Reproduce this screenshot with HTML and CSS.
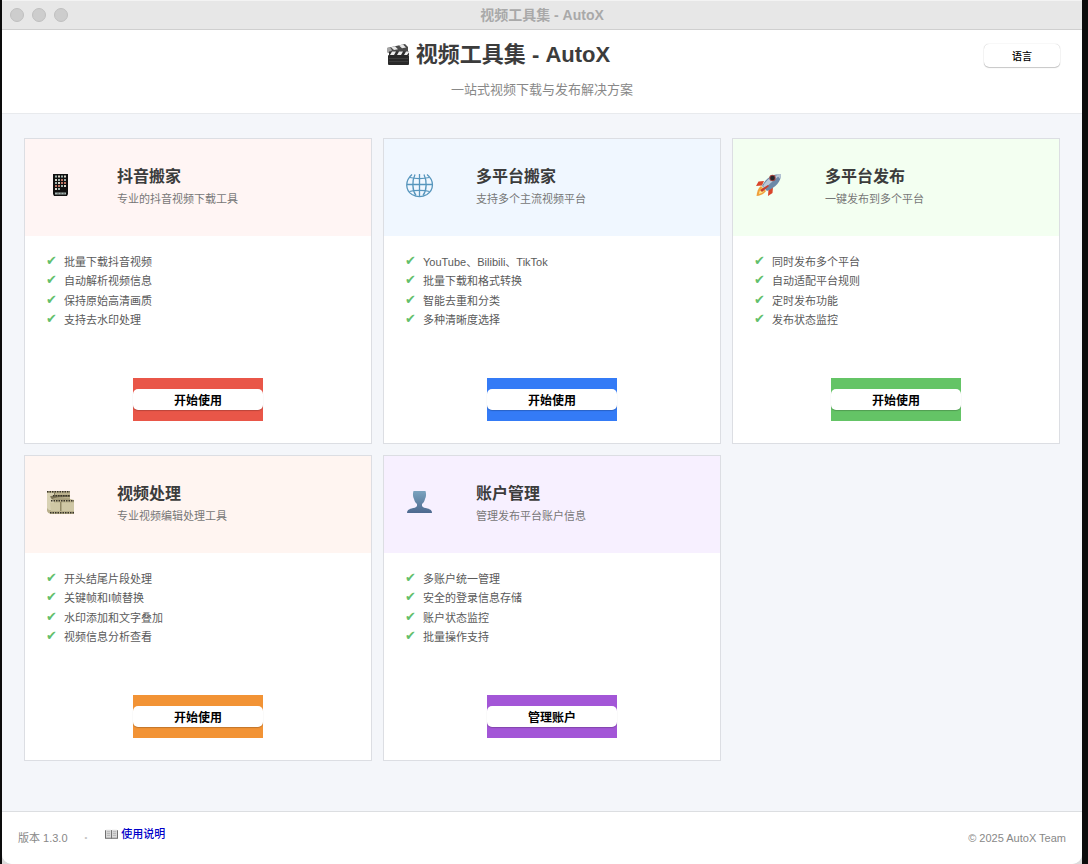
FILE: index.html
```html
<!DOCTYPE html>
<html lang="zh-CN">
<head>
    <meta charset="UTF-8">
    <meta name="viewport" content="width=device-width, initial-scale=1.0">
    <title>视频工具集 - AutoX</title>
    <link rel="stylesheet" href="styles.css">
</head>
<body>
    <div class="window">
        <div class="titlebar">
            <div class="lights"><i></i><i></i><i></i></div>
            <span class="titlebar-text">视频工具集 - AutoX</span>
        </div>

        <header class="header">
            <div class="header-row">
                <h1>
                    <svg class="clapper" viewBox="0 0 24 22" aria-hidden="true">
                        <path d="M1 4L19 0l3 3v6H3L1 8z" fill="#4a4a4a"/>
                        <path d="M5 3.200l4-1 3 3-4 .8zM13 1.500l4-1 3 3-4 .8z" fill="#e8e8e8"/>
                        <path d="M1 4l3-.7 2 3L3 9 1 8z" fill="#a5a5a5"/>
                        <path d="M3 7.500h20v3.500H3z" fill="#303030"/>
                        <path d="M6 7.500h4L8 11H4zM13 7.500h4L15 11h-4zM20 7.500h3v1L21 11h-3z" fill="#eee"/>
                        <rect x="2" y="11" width="21" height="10" rx="1" fill="#292929"/>
                        <path d="M3 14.500h19M3 17.500h19" stroke="#484848" stroke-width=".7"/>
                    </svg>
                    <span>视频工具集 - AutoX</span>
                </h1>
                <button type="button" class="lang-btn">语言</button>
            </div>
            <p class="tagline">一站式视频下载与发布解决方案</p>
        </header>

        <main class="cards">
            <section class="card red">
                <div class="card-head">
                    <svg class="card-icon" viewBox="0 0 28 24" aria-hidden="true">
                        <path d="M6 1h15v20l-1 2H7l-1-2z" fill="#111"/>
                        <g fill="#9fb3ad">
                            <path d="M8 2.500h2v2H8zM14 2.500h2v2h-2zM11 6h2v2h-2zM17 6h2v2h-2zM8 9h2v2H8zM14 12h2v2h-2zM11 15h2v2h-2z"/>
                        </g>
                        <g fill="#d8d4c8">
                            <path d="M11 2.500h2v2h-2zM17 2.500h2v2h-2zM8 6h2v2H8zM11 9h2v2h-2zM17 12h2v2h-2zM8 15h2v2H8z"/>
                        </g>
                        <g fill="#bd7563">
                            <path d="M14 6h2v2h-2zM14 9h2v2h-2zM17 9h2v2h-2zM8 12h2v2H8zM11 12h2v2h-2z"/>
                        </g>
                        <path d="M8 19.500h11v2H8z" fill="#a9b9b4"/>
                        <path d="M11 19.500v2M14 19.500v2M17 19.500v2" stroke="#333" stroke-width=".7"/>
                    </svg>
                    <div>
                        <h2>抖音搬家</h2>
                        <p>专业的抖音视频下载工具</p>
                    </div>
                </div>
                <ul>
                    <li><span class="check">✔</span>批量下载抖音视频</li>
                    <li><span class="check">✔</span>自动解析视频信息</li>
                    <li><span class="check">✔</span>保持原始高清画质</li>
                    <li><span class="check">✔</span>支持去水印处理</li>
                </ul>
                <div class="action"><button type="button">开始使用</button></div>
            </section>

            <section class="card blue">
                <div class="card-head">
                    <svg class="card-icon" viewBox="0 0 28 24" aria-hidden="true">
                        <g fill="none" stroke="#5796bd" stroke-width="1.300">
                            <path d="M6 1.500C-1.500 8-.5 17.500 6 21.500c4.500 2.500 10.500 2.500 15 0C28 17 28.500 7.500 21 1.500"/>
                            <path d="M9 1.500C6 8 6 17 10 22.500M18 1.500c3 6.500 3 15.500-1 21M13.500 1v22"/>
                            <path d="M4 4.500c5 1.500 14 1.500 19 0M1 11.500h25M3.500 18.500c5-1.500 15-1.500 20 0"/>
                        </g>
                    </svg>
                    <div>
                        <h2>多平台搬家</h2>
                        <p>支持多个主流视频平台</p>
                    </div>
                </div>
                <ul>
                    <li><span class="check">✔</span>YouTube、Bilibili、TikTok</li>
                    <li><span class="check">✔</span>批量下载和格式转换</li>
                    <li><span class="check">✔</span>智能去重和分类</li>
                    <li><span class="check">✔</span>多种清晰度选择</li>
                </ul>
                <div class="action"><button type="button">开始使用</button></div>
            </section>

            <section class="card green">
                <div class="card-head">
                    <svg class="card-icon" viewBox="0 0 28 24" aria-hidden="true">
                        <path d="M9 8L3.500 8.500 1 13l6-.5zM18 14l-.5 6-4.500 3 .5-7z" fill="#d9452b"/>
                        <path d="M6 13c-3 2-4 6-4.500 10C6 22.500 9 21 11 18z" fill="#f0a03c"/>
                        <path d="M6.500 15.500c-2 2-2.500 4-2.500 5.500 2-.5 4-1.500 5-3z" fill="#fbe58b"/>
                        <path d="M7 13C11 5 17 1 26 1c0 8-5 13-14 17z" fill="#6c88a8"/>
                        <path d="M8 13C12 6 17 2.500 25 2L10 15z" fill="#b9c8d9"/>
                        <path d="M21 1.300L26 1c0 2-.3 3.500-.8 5z" fill="#b6c5d5"/>
                        <circle cx="17.500" cy="5" r="3.200" fill="#a34540"/>
                        <circle cx="17.500" cy="5" r="2.300" fill="#26252c"/>
                        <path d="M5 17l8-5 1 1-7 6z" fill="#c73b2c"/>
                    </svg>
                    <div>
                        <h2>多平台发布</h2>
                        <p>一键发布到多个平台</p>
                    </div>
                </div>
                <ul>
                    <li><span class="check">✔</span>同时发布多个平台</li>
                    <li><span class="check">✔</span>自动适配平台规则</li>
                    <li><span class="check">✔</span>定时发布功能</li>
                    <li><span class="check">✔</span>发布状态监控</li>
                </ul>
                <div class="action"><button type="button">开始使用</button></div>
            </section>

            <section class="card orange">
                <div class="card-head">
                    <svg class="card-icon" viewBox="0 0 28 24" aria-hidden="true">
                        <path d="M0 1h23v8l4 1v14H4c-2-.5-3.500-1.500-4-3z" fill="#b9b08c"/>
                        <path d="M0 3h7v17H2l-2-2z" fill="#d8d1b3"/>
                        <path d="M3 12.500h10v8.500H4zM14.500 12.500H27V21H14.500z" fill="#cfc7a5"/>
                        <path d="M3 6.500c4-2 14-1.500 20-1.500v2C16 7 8 7 5 9.500z" fill="#7d7456"/>
                        <path d="M5 9.500C8 8 16 8 23 8.500V10H6z" fill="#a59c79"/>
                        <path d="M0 1.800h23M6 5.800h17M4 10.800h23M3 22.800h24" stroke="#38342a" stroke-width="1.400" stroke-dasharray="1.500 1"/>
                        <path d="M13.800 12v9M7.500 2.500v2.500" stroke="#827958"/>
                    </svg>
                    <div>
                        <h2>视频处理</h2>
                        <p>专业视频编辑处理工具</p>
                    </div>
                </div>
                <ul>
                    <li><span class="check">✔</span>开头结尾片段处理</li>
                    <li><span class="check">✔</span>关键帧和I帧替换</li>
                    <li><span class="check">✔</span>水印添加和文字叠加</li>
                    <li><span class="check">✔</span>视频信息分析查看</li>
                </ul>
                <div class="action"><button type="button">开始使用</button></div>
            </section>

            <section class="card purple">
                <div class="card-head">
                    <svg class="card-icon" viewBox="0 0 28 24" aria-hidden="true">
                        <defs>
                            <linearGradient id="bust" x1="0" y1="0" x2="0" y2="1">
                                <stop offset="0" stop-color="#7ba3bf"/>
                                <stop offset="1" stop-color="#4d698f"/>
                            </linearGradient>
                        </defs>
                        <path d="M7.500 1h12c1 3 .5 6-.5 8-.5 2-1.500 4-3 5v2c1 1.500 3 2 5.500 2.500 3 .7 4.500 2 4.500 4.500H1c0-2.500 1.500-3.800 4.500-4.500C8 18 10 17.500 11 16v-2c-1.500-1-2.500-3-3-5-1-2-1.500-5-.5-8z" fill="url(#bust)"/>
                    </svg>
                    <div>
                        <h2>账户管理</h2>
                        <p>管理发布平台账户信息</p>
                    </div>
                </div>
                <ul>
                    <li><span class="check">✔</span>多账户统一管理</li>
                    <li><span class="check">✔</span>安全的登录信息存储</li>
                    <li><span class="check">✔</span>账户状态监控</li>
                    <li><span class="check">✔</span>批量操作支持</li>
                </ul>
                <div class="action"><button type="button">管理账户</button></div>
            </section>
        </main>

        <footer class="footer">
            <span>版本 1.3.0</span>
            <span class="dot">•</span>
            <a href="#help">
                <svg class="book" viewBox="0 0 14 11" aria-hidden="true">
                    <path d="M0 1h14v9H0z" fill="#686868"/>
                    <path d="M1 .5h5.500v8.500H1zM7.500.5H13v8.500H7.500z" fill="#dcdcdc"/>
                    <path d="M2 2.500h3.500M2 4.500h3.500M2 6.500h3.500M8.500 2.500H12M8.500 4.500H12M8.500 6.500H12" stroke="#aaa" stroke-width=".8"/>
                    <path d="M7 1v9" stroke="#777"/>
                </svg>使用说明</a>
            <span class="copyright">© 2025 AutoX Team</span>
        </footer>
    </div>
</body>
</html>
```
FILE: styles.css
```css
* {
    box-sizing: border-box;
}

html {
    background-color: #0c0c0c;
}

body {
    margin: 0 6px 0 2px;
    background-color: #dcdcdc;
    font-family: "Liberation Sans", "Noto Sans CJK SC", sans-serif;
    color: #3c3c3c;
}

h1, h2, p, ul {
    margin: 0;
    padding: 0;
}

button {
    font-family: inherit;
    color: #000;
    background-color: #fff;
    border: none;
    border-radius: 5px;
    padding: 0;
    cursor: pointer;
}

.window {
    min-height: 100vh;
    display: flex;
    flex-direction: column;
    background-color: #f4f6fa;
    border-radius: 0 0 10px 10px;
    overflow: hidden;
}

/* title bar */
.titlebar {
    display: grid;
    grid-template-columns: 1fr auto 1fr;
    align-items: center;
    height: 30px;
    padding: 0 8px;
    background-color: #e7e7e7;
    border-top: 1px solid #f3f3f3;
    border-bottom: 1px solid #cfcfcf;
}

.lights {
    display: flex;
    gap: 8px;
}

.lights i {
    width: 14px;
    height: 14px;
    border-radius: 50%;
    background-color: #cdcdcd;
    border: 1px solid #c0c0c0;
}

.titlebar-text {
    font-size: 14px;
    line-height: 20px;
    font-weight: bold;
    color: #a9a9a9;
}

/* header */
.header {
    padding: 10px 22px 13px;
    background-color: #fff;
    border-bottom: 1px solid #e8eaed;
}

.header-row {
    display: flex;
    align-items: center;
    gap: 12px;
}

h1 {
    flex: 1;
    display: flex;
    justify-content: center;
    align-items: center;
    gap: 6px;
    font-size: 22px;
    line-height: 30px;
}

.clapper {
    width: 24px;
    height: 22px;
}

.lang-btn {
    width: 76px;
    height: 23px;
    font-size: 10px;
    font-weight: 500;
    box-shadow: 0 0 1px rgba(0, 0, 0, 0.3), 0 1px 1px rgba(0, 0, 0, 0.2);
}

.tagline {
    margin-top: 10px;
    font-size: 13px;
    line-height: 20px;
    text-align: center;
    color: #888;
}

/* cards */
.cards {
    flex: 1;
    display: grid;
    grid-template-columns: 348fr 338fr 328fr;
    align-content: start;
    gap: 11px;
    padding: 24px 22px;
}

.card {
    background-color: #fff;
    border: 1px solid #dcdee3;
    padding-bottom: 22px;
}

.card-head {
    display: flex;
    gap: 42px;
    height: 97px;
    padding: 26px 22px;
}

.card-icon {
    width: 28px;
    height: 40px;
}

h2 {
    font-size: 16px;
    line-height: 24px;
}

.card-head p {
    font-size: 11px;
    line-height: 20px;
    color: #777;
}

.card ul {
    display: grid;
    grid-auto-rows: 1fr;
    height: 78px;
    margin: 15px 21px 49px;
    list-style: none;
    font-size: 11px;
    color: #5a5a5a;
}

.card li {
    display: flex;
    align-items: center;
}

.check {
    width: 18px;
    font-family: "DejaVu Sans", sans-serif;
    font-size: 13px;
    line-height: 16px;
    color: #62bf6b;
}

.action {
    width: 130px;
    margin: 0 auto;
    padding: 11px 0;
}

.action button {
    display: block;
    width: 100%;
    height: 21px;
    font-size: 12px;
    font-weight: bold;
    box-shadow: 0 1px 1px rgba(0, 0, 0, 0.2);
}

.red .card-head { background-color: #fff5f4; }
.red .action { background-color: #e95648; }

.blue .card-head { background-color: #f0f7ff; }
.blue .action { background-color: #347bf6; }

.green .card-head { background-color: #f3fff1; }
.green .action { background-color: #64c466; }

.orange .card-head { background-color: #fff5f1; }
.orange .action { background-color: #f29335; }

.purple .card-head { background-color: #f7f0ff; }
.purple .action { background-color: #a356d7; }

/* footer */
.footer {
    display: flex;
    align-items: flex-end;
    height: 53px;
    padding: 12px 16px 16px;
    background-color: #fff;
    border-top: 1px solid #dcdee1;
    font-size: 11px;
    line-height: 20px;
    color: #888;
}

.dot {
    padding: 0 18px 0 17px;
    font-size: 8px;
    color: #c4c4c4;
}

.footer a {
    align-self: flex-start;
    display: flex;
    align-items: center;
    gap: 3px;
    font-weight: 500;
    color: #0000c8;
    text-decoration: none;
}

.book {
    width: 13px;
    height: 11px;
}

.copyright {
    margin-left: auto;
}
```
